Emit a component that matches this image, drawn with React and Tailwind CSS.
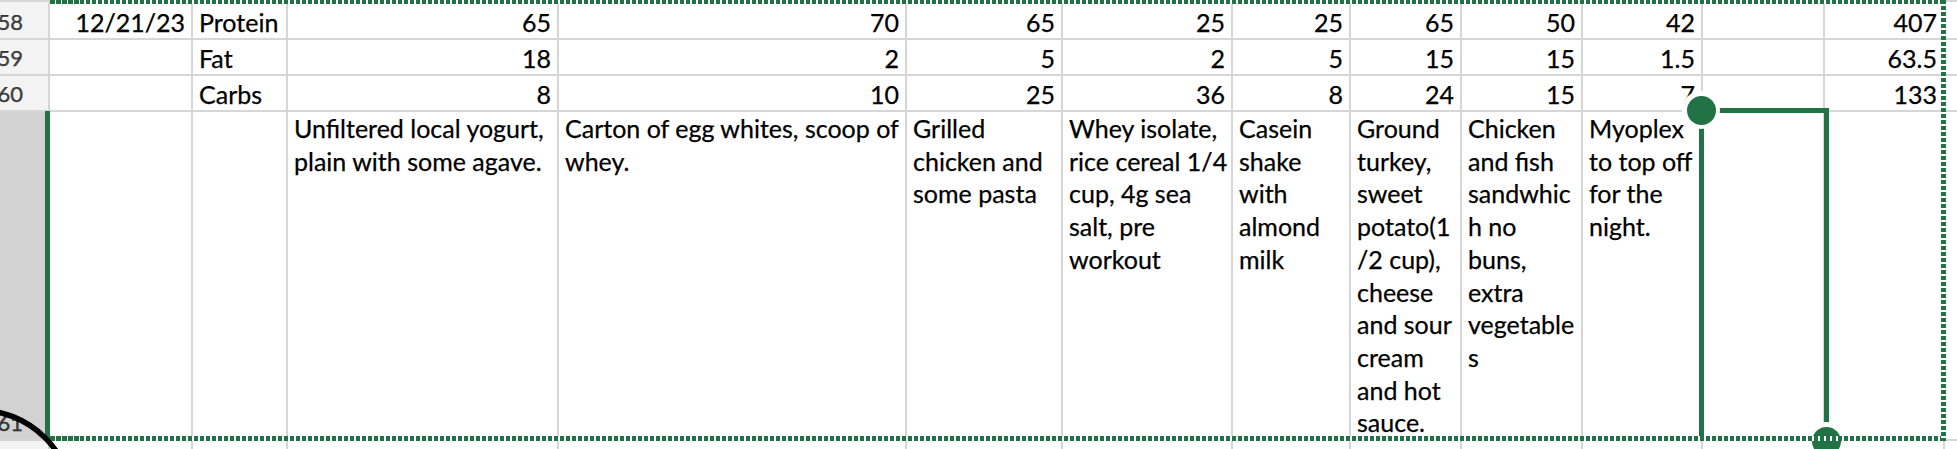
import React from 'react';

// widths of the sheet columns (row header first), gridlines are the 2px gaps
const macros = [
  { n: 58, date: '12/21/23', label: 'Protein', vals: ['65', '70', '65', '25', '25', '65', '50', '42', '', '407'] },
  { n: 59, date: '', label: 'Fat', vals: ['18', '2', '5', '2', '5', '15', '15', '1.5', '', '63.5'] },
  { n: 60, date: '', label: 'Carbs', vals: ['8', '10', '25', '36', '8', '24', '15', '7', '', '133'] },
];

const notes = [
  ['Unfiltered local yogurt,', 'plain with some agave.'],
  ['Carton of egg whites, scoop of', 'whey.'],
  ['Grilled', 'chicken and', 'some pasta'],
  ['Whey isolate,', 'rice cereal 1/4', 'cup, 4g sea', 'salt, pre', 'workout'],
  ['Casein', 'shake', 'with', 'almond', 'milk'],
  ['Ground', 'turkey,', 'sweet', 'potato(1', '/2 cup),', 'cheese', 'and sour', 'cream', 'and hot', 'sauce.'],
  ['Chicken', 'and fish', 'sandwhic', 'h no', 'buns,', 'extra', 'vegetable', 's'],
  ['Myoplex', 'to top off', 'for the', 'night.'],
];

const RowHeader = ({ n, selected }) => (
  <div
    className={`flex items-end justify-end pr-[25px] pb-[2px] text-[22px] leading-[28px] ${
      selected ? 'bg-[#d2d2d2] text-[#3a3a3a]' : 'bg-[#f3f3f3] text-[#444]'
    }`}
  >
    {n}
  </div>
);

const Cell = ({ children, right }) => (
  <div
    className={`bg-white flex items-end overflow-hidden whitespace-nowrap pb-[1px] leading-[29px] ${
      right ? 'justify-end pr-[6px]' : 'pl-[6px]'
    }`}
  >
    {children}
  </div>
);

const App = () => {
  return (
    <div className="relative w-[1957px] h-[449px] overflow-hidden bg-white text-[25px] text-black [font-family:Lato,sans-serif] [-webkit-text-stroke:0.25px_#000]">
      <div className="grid pt-[2px] gap-[2px] bg-[#d6d6d6] w-max grid-cols-[48px_141px_93px_269px_346px_154px_168px_116px_109px_119px_118px_120px_118px_100px] grid-rows-[36px_34px_34px_327px_30px]">
        {macros.map((row) => (
          <React.Fragment key={row.n}>
            <RowHeader n={row.n} />
            <Cell right>{row.date}</Cell>
            <Cell>{row.label}</Cell>
            {row.vals.map((v, i) => (
              <Cell key={i} right>
                {v}
              </Cell>
            ))}
            <Cell />
          </React.Fragment>
        ))}

        {/* row 61: wrapped notes, top aligned */}
        <RowHeader n={61} selected />
        <div className="bg-white" />
        <div className="bg-white" />
        {notes.map((lines, i) => (
          <div key={i} className="bg-white overflow-hidden whitespace-nowrap pl-[6px] leading-[32.7px]">
            {lines.map((l, j) => (
              <div key={j}>{l}</div>
            ))}
          </div>
        ))}
        <div className="bg-white" />
        <div className="bg-white" />
        <div className="bg-white" />

        {/* row 62 */}
        <div className="bg-[#f3f3f3]" />
        {Array.from({ length: 13 }).map((_, i) => (
          <div key={i} className="bg-white" />
        ))}
      </div>

      {/* selected row header edge */}
      <div className="absolute left-[45px] top-[111px] w-[5px] h-[329px] bg-[#217346]" />

      {/* active cell selection */}
      <div className="absolute left-[1699px] top-[108px] w-[130px] h-[333px] border-t-[5px] border-l-[5px] border-r-[5px] border-[#217346]" />
      <div className="absolute left-[1682px] top-[91px] w-[38px] h-[38px] rounded-full bg-white flex items-center justify-center">
        <div className="w-[29px] h-[29px] rounded-full bg-[#217346]" />
      </div>
      <div className="absolute left-[1807px] top-[422px] w-[38px] h-[38px] rounded-full bg-white flex items-center justify-center">
        <div className="w-[29px] h-[29px] rounded-full bg-[#217346]" />
      </div>

      {/* copy range marching ants */}
      <div className="absolute left-[50px] top-0 w-[1896px] h-[4px] bg-[repeating-linear-gradient(90deg,#217346_0px,#217346_4.5px,#ffffff_4.5px,#ffffff_6px)]" />
      <div className="absolute left-[50px] top-[436px] w-[1896px] h-[5px] bg-[repeating-linear-gradient(90deg,#217346_0px,#217346_4.5px,#ffffff_4.5px,#ffffff_6px)]" />
      <div className="absolute left-[1941px] top-0 w-[5px] h-[441px] bg-[repeating-linear-gradient(180deg,#217346_0px,#217346_4.5px,#ffffff_4.5px,#ffffff_6px)]" />

      {/* touch pointer ring */}
      <svg className="absolute left-0 top-0 pointer-events-none" width="120" height="449" viewBox="0 0 120 449">
        <circle cx="-22" cy="505" r="95" fill="none" stroke="#000" strokeWidth="5.5" />
      </svg>
    </div>
  );
};

export default App;
